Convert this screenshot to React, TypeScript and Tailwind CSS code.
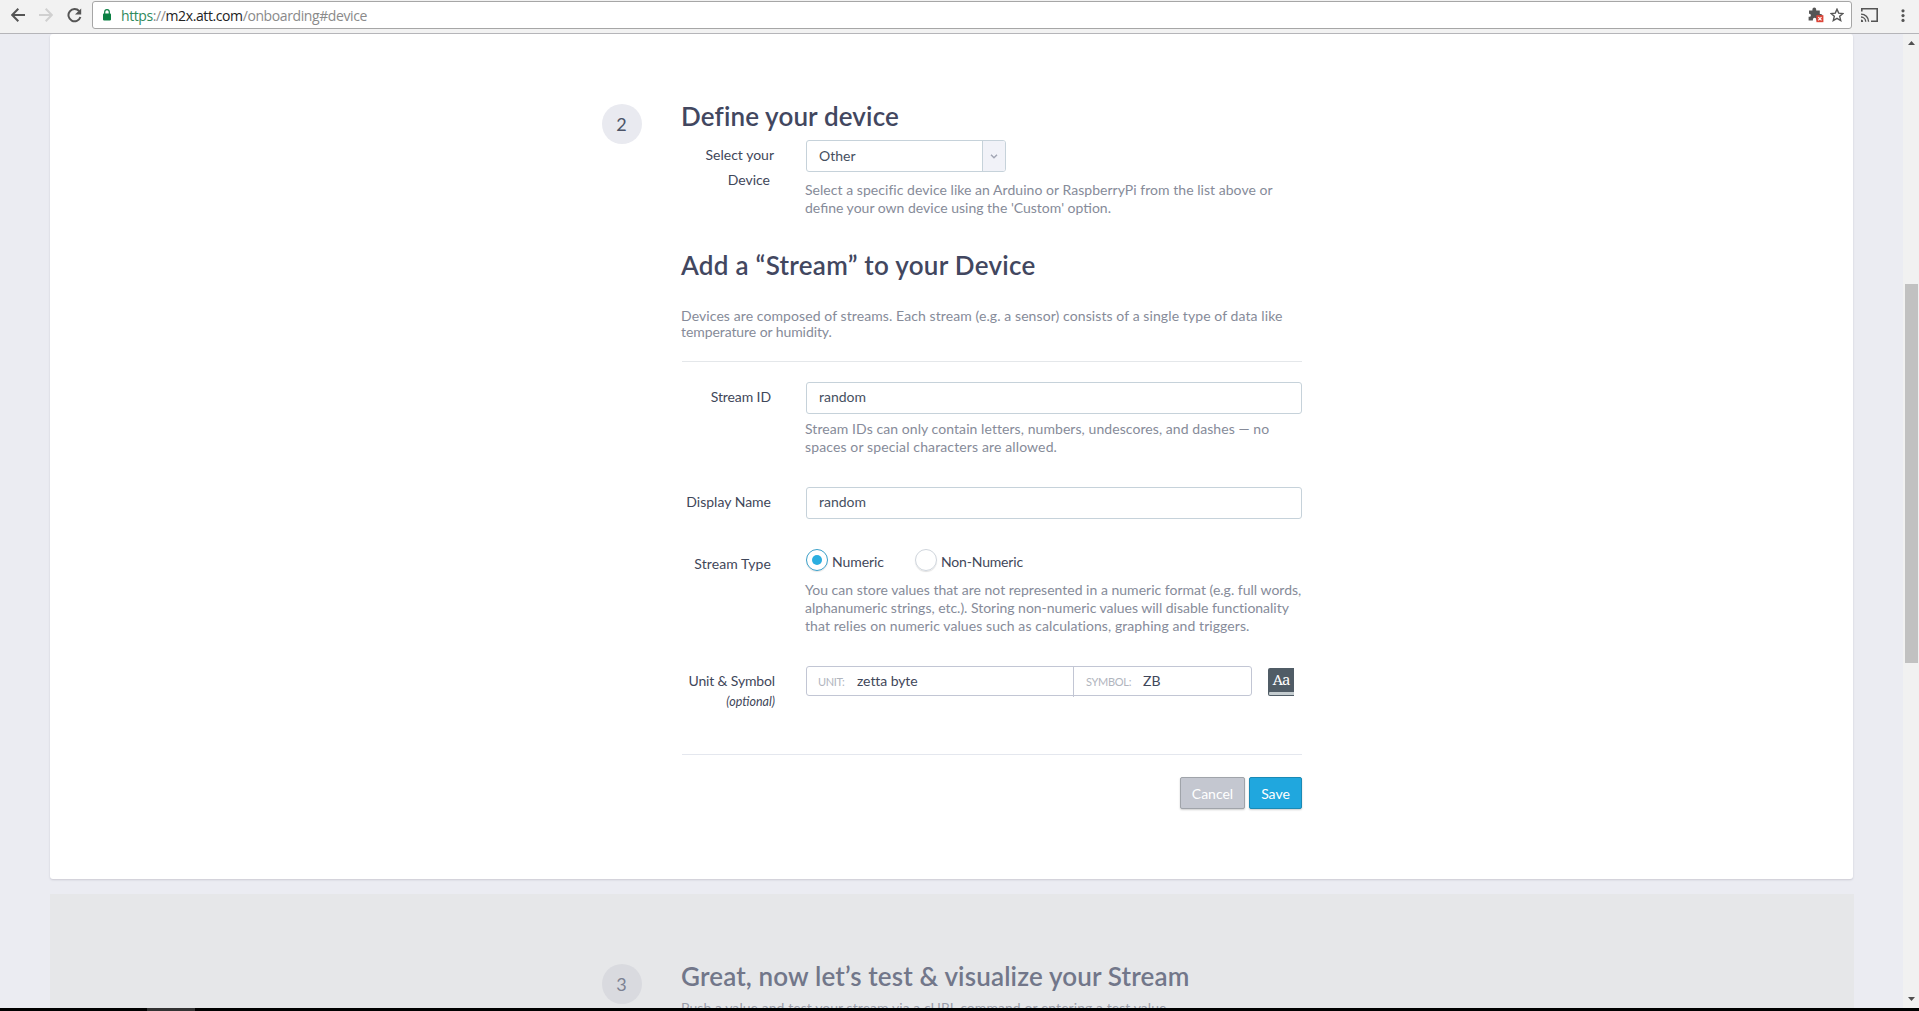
import type { ReactNode } from 'react';

function BrowserBar() {
  return (
    <header className="flex h-[34px] shrink-0 items-start border-b border-[#b5b5b9] bg-[#f2f2f2]">
      <div className="flex h-[30px] w-[92px] shrink-0 items-center pl-[11px]">
        <svg width="14" height="14" viewBox="0 0 14 14" fill="none" stroke="#555" strokeWidth="2" className="shrink-0">
          <path d="M14 7H1.5M7.3 0.8L1.2 7l6.1 6.2" />
        </svg>
        <svg width="14" height="14" viewBox="0 0 14 14" fill="none" stroke="#d0d0d0" strokeWidth="2" className="ml-[14px] shrink-0">
          <path d="M0 7h12.5M6.7 0.8L12.8 7l-6.1 6.2" />
        </svg>
        <svg width="15" height="15" viewBox="0 0 15 15" className="ml-[14px] shrink-0">
          <path d="M12.2 3.2A6.1 6.1 0 1 0 13.4 9" fill="none" stroke="#555" strokeWidth="2" />
          <path d="M14.2 0.4v6.2H8z" fill="#555" />
        </svg>
      </div>
      <div className="mt-px flex h-[28px] w-[1760px] shrink-0 items-center rounded-[3px] border border-[#a6a6a6] bg-white">
        <svg width="8" height="12" viewBox="0 0 8 12" className="ml-[10px] shrink-0">
          <path d="M1.7 5V3a2.3 2.3 0 0 1 4.6 0v2" fill="none" stroke="#0b8043" strokeWidth="1.2" />
          <rect y="4.4" width="8" height="7" rx="0.8" fill="#0b8043" />
        </svg>
        <span className="ml-[10px] pt-px font-['Open_Sans','Noto_Sans',sans-serif] text-[14px] leading-[20px] tracking-[-0.4px] text-[#8a8a8a]">
          <span className="text-[#2f8a5b]">https</span>://<span className="text-[#222]">m2x.att.com</span>/onboarding#device
        </span>
        <svg width="16" height="16" viewBox="0 0 16 16" className="ml-auto shrink-0">
          <path
            d="M1 3.6h3.4V2.4a1.9 1.9 0 0 1 3.8 0v1.2h3.6V7h.9a1.8 1.8 0 0 1 0 3.6h-.9V13.4H8.3v-1a1.7 1.7 0 0 0-3.4 0v1H.6V9.8h.8a1.5 1.5 0 0 0 0-3H1z"
            fill="#555"
          />
          <rect x="8.4" y="8.2" width="7" height="7" fill="#dd4538" />
          <path d="M10.3 10.1l3.2 3.2M13.5 10.1l-3.2 3.2" stroke="#fff" strokeWidth="1.2" />
        </svg>
        <svg width="14" height="14" viewBox="0 0 14 14" className="mr-[7px] ml-[6px] shrink-0">
          <path
            d="M7 1.2l1.7 3.9 4.2.4-3.2 2.8 1 4.2L7 10.3l-3.7 2.2 1-4.2L1.1 5.5l4.2-.4z"
            fill="none"
            stroke="#555"
            strokeWidth="1.4"
          />
        </svg>
      </div>
      <svg width="17" height="14" viewBox="0 0 17 14" fill="none" stroke="#555" className="mt-[8px] ml-[9px] shrink-0">
        <path d="M.8 3.6V.8h15.4v12.4H10" strokeWidth="1.6" />
        <path d="M0 6.1a7.6 7.6 0 0 1 7.6 7.6M0 9a4.7 4.7 0 0 1 4.7 4.7" strokeWidth="1.4" />
        <path d="M0 11.6a2.2 2.2 0 0 1 2.2 2.3H0z" fill="#555" stroke="none" />
      </svg>
      <svg width="4" height="14" viewBox="0 0 4 14" fill="#555" className="mt-[9px] ml-[23px] shrink-0">
        <circle cx="2" cy="1.8" r="1.6" />
        <circle cx="2" cy="6.6" r="1.6" />
        <circle cx="2" cy="11.4" r="1.6" />
      </svg>
    </header>
  );
}

function Scrollbar() {
  return (
    <div className="flex w-[16px] shrink-0 flex-col items-center bg-[#f1f1f1]">
      <svg width="7" height="4" viewBox="0 0 7 4" className="mt-[7px]">
        <path d="M3.5 0L7 4H0z" fill="#505050" />
      </svg>
      <div className="mt-[239px] h-[379px] w-[13px] bg-[#c1c1c1]" />
      <svg width="7" height="4" viewBox="0 0 7 4" className="mt-auto mb-[7px]">
        <path d="M3.5 4L0 0h7z" fill="#505050" />
      </svg>
    </div>
  );
}

function Row({ label, className, children }: { label: ReactNode; className: string; children: ReactNode }) {
  return (
    <div className={`flex ${className}`}>
      <div className="w-[124px] shrink-0 text-right text-[14px] text-[#3f475a]">{label}</div>
      <div className="w-[496px] shrink-0">{children}</div>
    </div>
  );
}

function Line({ className = '', children }: { className?: string; children: ReactNode }) {
  return <div className={`-ml-px whitespace-nowrap ${className}`}>{children}</div>;
}

function TextInput({ value }: { value: string }) {
  return (
    <input
      readOnly
      defaultValue={value}
      className="block h-[32px] w-[496px] rounded-[3px] border border-[#c6d2da] bg-white px-[12px] pb-[3px] text-[14px] text-[#46505f] outline-none"
    />
  );
}

function DeviceSection() {
  return (
    <section className="ml-[50px] flex h-[845px] w-[1803px] shrink-0 rounded-[3px] bg-white shadow-[0_1px_2px_rgba(60,50,70,0.18)]">
      <div className="mt-[70px] ml-[552px] flex h-[40px] w-[40px] shrink-0 items-center justify-center rounded-full bg-[#e9eaf0] pr-px text-[18px] text-[#4c5468]">
        2
      </div>
      <div className="ml-[40px] w-[620px] shrink-0">
        <h2 className="mt-[66px] -ml-px text-[26px] leading-[32px] font-semibold tracking-[0.14px] whitespace-nowrap text-[#42475f]">
          Define your device
        </h2>

        <Row
          className="mt-[8px] h-[75px]"
          label={
            <div className="pt-[2px] leading-[25px]">
              <div className="pr-[32px]">Select your</div>
              <div className="pr-[36px]">Device</div>
            </div>
          }
        >
          <div className="flex h-[32px] w-[200px] overflow-hidden rounded-[3px] border border-[#c6d2da]">
            <div className="flex-1 pl-[12px] text-[14px] leading-[30px] text-[#46505f]">Other</div>
            <div className="flex w-[23px] items-center justify-center border-l border-[#c6d2da] bg-[#f1f2f8]">
              <svg width="8" height="5" viewBox="0 0 8 5" fill="none" stroke="#a3a7b5" strokeWidth="1.5">
                <path d="M1 .8l3 2.9L7 .8" />
              </svg>
            </div>
          </div>
          <div className="mt-[9px] text-[14px] leading-[18px] text-[#868b99]">
            <Line className="tracking-[0.04px]">
              Select a specific device like an Arduino or RaspberryPi from the list above or
            </Line>
            <Line>define your own device using the 'Custom' option.</Line>
          </div>
        </Row>

        <h2 className="mt-[34px] -ml-px text-[26px] leading-[32px] font-semibold tracking-[0.28px] whitespace-nowrap text-[#42475f]">
          Add a “Stream” to your Device
        </h2>
        <div className="mt-[27px] text-[14px] leading-[16px] text-[#868b99]">
          <Line className="tracking-[0.09px]">
            Devices are composed of streams. Each stream (e.g. a sensor) consists of a single type of data like
          </Line>
          <Line className="tracking-[-0.08px]">temperature or humidity.</Line>
        </div>

        <div className="mt-[21px] h-px bg-[#e4e7ea]" />

        <Row className="mt-[20px] h-[105px]" label={<div className="pr-[35px] leading-[30px] tracking-[-0.1px]">Stream ID</div>}>
          <TextInput value="random" />
          <div className="mt-[6px] text-[14px] leading-[18px] text-[#868b99]">
            <Line className="tracking-[0.07px]">
              Stream IDs can only contain letters, numbers, undescores, and dashes — no
            </Line>
            <Line className="tracking-[0.13px]">spaces or special characters are allowed.</Line>
          </div>
        </Row>

        <Row className="h-[62px]" label={<div className="pr-[35px] leading-[30px]">Display Name</div>}>
          <TextInput value="random" />
        </Row>

        <Row className="h-[117px]" label={<div className="pt-[3px] pr-[35px] leading-[24px] tracking-[0.1px]">Stream Type</div>}>
          <div className="flex h-[22px] text-[14px] leading-[25px] text-[#3f475a]">
            <span className="flex h-[22px] w-[22px] items-center justify-center rounded-full border border-[#3a9fc8] shadow-[0_1px_1px_rgba(0,0,0,0.1)]">
              <span className="h-[10px] w-[10px] rounded-full bg-[#2aaee0]" />
            </span>
            <span className="w-[87px] pl-[4px] tracking-[-0.08px]">Numeric</span>
            <span className="h-[22px] w-[22px] rounded-full border border-[#cfd5dc] shadow-[0_1px_1px_rgba(0,0,0,0.12)]" />
            <span className="pl-[4px] tracking-[-0.17px] whitespace-nowrap">Non-Numeric</span>
          </div>
          <div className="mt-[10px] text-[14px] leading-[18px] text-[#868b99]">
            <Line className="tracking-[0.01px]">
              You can store values that are not represented in a numeric format (e.g. full words,
            </Line>
            <Line className="tracking-[-0.02px]">
              alphanumeric strings, etc.). Storing non-numeric values will disable functionality
            </Line>
            <Line className="tracking-[0.08px]">
              that relies on numeric values such as calculations, graphing and triggers.
            </Line>
          </div>
        </Row>

        <Row
          className="h-[88px]"
          label={
            <div className="pr-[31px] whitespace-nowrap">
              <div className="leading-[30px] tracking-[-0.15px]">Unit &amp; Symbol</div>
              <div className="text-[12.5px] leading-[11px] italic">(optional)</div>
            </div>
          }
        >
          <div className="flex text-[14px] leading-[28px] text-[#3f475a]">
            <div className="flex h-[30px] w-[446px] rounded-[3px] border border-[#c2c6d4]">
              <div className="flex h-[30px] w-[267px] border-r border-[#c2c6d4]">
                <span className="w-[38px] pl-[11px] text-[11px] leading-[30px] tracking-[-0.35px] text-[#b1b5be]">UNIT:</span>
                <span className="pl-[12px] tracking-[-0.08px]">zetta byte</span>
              </div>
              <span className="w-[57px] pl-[12px] text-[11px] leading-[30px] tracking-[-0.3px] text-[#b1b5be]">SYMBOL:</span>
              <span className="pl-[12px]">ZB</span>
            </div>
            <div className="mt-[2px] ml-[16px] flex h-[28px] w-[26px] flex-col rounded-l-[2px] bg-[#505c66]">
              <span className="h-[24px] text-center font-['Noto_Serif','Liberation_Serif',serif] text-[15px] leading-[23px] tracking-[-0.9px] text-white">
                Aa
              </span>
              <span className="ml-[1px] h-[3px] rounded-l-[1px] bg-[#c4cccf]" />
            </div>
          </div>
        </Row>

        <div className="h-px bg-[#e4e7ee]" />

        <div className="mt-[22px] flex justify-end gap-[4px] text-[14px] text-white">
          <button className="h-[32px] w-[65px] rounded-[2px] border border-[#a0a4aa] bg-[#c4c7d0] shadow-[0_1px_2px_rgba(0,0,0,0.2)]">
            Cancel
          </button>
          <button className="h-[32px] w-[53px] rounded-[2px] border border-[#1a8ab5] bg-[#20a7de] shadow-[0_1px_2px_rgba(0,0,0,0.2)]">
            Save
          </button>
        </div>
      </div>
    </section>
  );
}

function TestSection() {
  return (
    <section className="mt-[15px] ml-[50px] flex h-[200px] w-[1804px] shrink-0 bg-[#e6e7e9]">
      <div className="mt-[70px] ml-[552px] flex h-[40px] w-[40px] shrink-0 items-center justify-center rounded-full bg-[#d9dadf] pr-px text-[18px] text-[#7c8192]">
        3
      </div>
      <div className="ml-[40px] w-[620px] shrink-0">
        <h2 className="mt-[66px] -ml-px text-[26px] leading-[32px] font-semibold tracking-[0.15px] whitespace-nowrap text-[#72778a]">
          Great, now let’s test &amp; visualize your Stream
        </h2>
        <Line className="mt-[7px] text-[14px] leading-[18px] tracking-[0.06px] text-[#9a9eaa]">
          Push a value and test your stream via a cURL command or entering a test value.
        </Line>
      </div>
    </section>
  );
}

export default function App() {
  return (
    <div className="flex h-[1011px] w-[1919px] flex-col overflow-hidden bg-[#ebecf2] font-[Lato,sans-serif]">
      <BrowserBar />
      <div className="flex h-[974px] shrink-0">
        <main className="flex h-[974px] w-[1903px] shrink-0 flex-col overflow-hidden">
          <DeviceSection />
          <TestSection />
        </main>
        <Scrollbar />
      </div>
      <div className="flex h-[3px] shrink-0 bg-black">
        <div className="ml-[147px] w-[48px] bg-[#333]" />
      </div>
    </div>
  );
}
